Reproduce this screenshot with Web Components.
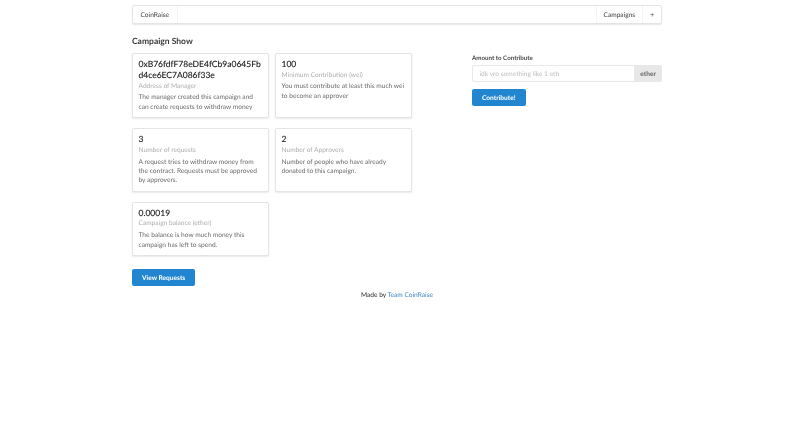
<!DOCTYPE html>
<html>
<head>
<meta charset="utf-8">
<title>CoinRaise</title>
<style>
  html, body { margin: 0; background: #fff; }
  body { font-family: Lato, "Open Sans", sans-serif; color: rgba(0,0,0,.87); text-rendering: geometricPrecision; }
</style>
</head>
<body>
<app-page>
  <top-menu></top-menu>
  <page-heading>Campaign Show</page-heading>
  <campaign-card slot="cards" style="grid-row: 1" title-text="0xB76fdfF78eDE4fCb9a0645Fbd4ce6EC7A086f33e" meta="Address of Manager">The manager created this campaign and can create requests to withdraw money</campaign-card>
  <campaign-card slot="cards" style="grid-row: 1" title-text="100" meta="Minimum Contribution (wei)">You must contribute at least this much wei to become an approver</campaign-card>
  <campaign-card slot="cards" style="grid-row: 2" title-text="3" meta="Number of requests">A request tries to withdraw money from the contract. Requests must be approved by approvers.</campaign-card>
  <campaign-card slot="cards" style="grid-row: 2" title-text="2" meta="Number of Approvers">Number of people who have already donated to this campaign.</campaign-card>
  <campaign-card slot="cards" style="grid-row: 3" title-text="0.00019" meta="Campaign balance (ether)">The balance is how much money this campaign has left to spend.</campaign-card>
  <blue-button slot="action">View Requests</blue-button>
  <contribute-form slot="side"></contribute-form>
</app-page>

<script>
class AppPage extends HTMLElement {
  connectedCallback() {
    this.attachShadow({ mode: 'open' });
    this.shadowRoot.innerHTML = `
      <style>
        :host { display: block; width: 530px; margin-left: 132px; padding-top: 5px; will-change: opacity; }
        .cols { display: flex; }
        .left { width: 280px; }
        .cards { display: grid; grid-template-columns: 137px 137px; column-gap: 6px; row-gap: 10px; align-items: stretch; }
        .action { display: flex; margin-top: 13px; }
        .side { width: 190px; margin-left: 60px; }
        footer { margin-top: 5px; text-align: center; font-size: 6.6px; line-height: 9.4px; }
        a { color: #4183c4; text-decoration: none; }
      </style>
      <slot></slot>
      <div class="cols">
        <div class="left">
          <div class="cards"><slot name="cards"></slot></div>
          <div class="action"><slot name="action"></slot></div>
        </div>
        <div class="side"><slot name="side"></slot></div>
      </div>
      <footer>Made by <a href="#">Team CoinRaise</a></footer>
    `;
  }
}

class TopMenu extends HTMLElement {
  connectedCallback() {
    this.attachShadow({ mode: 'open' });
    this.shadowRoot.innerHTML = `
      <style>
        :host { display: flex; height: 19px; box-sizing: border-box; border: 1px solid rgba(34,36,38,.12); border-radius: 2px; box-shadow: 0 1px 1px rgba(34,36,38,.1); font-size: 6.6px; color: rgba(0,0,0,.8); align-items: stretch; }
        .item { display: flex; align-items: center; padding: 0 7px; }
        .item.first { padding: 0 7.5px; border-right: 1px solid rgba(34,36,38,.05); }
        .gap { flex: 1; }
        .item.sep { border-left: 1px solid rgba(34,36,38,.05); }
      </style>
      <div class="item first">CoinRaise</div>
      <div class="gap"></div>
      <div class="item sep">Campaigns</div>
      <div class="item sep">+</div>
    `;
  }
}

class PageHeading extends HTMLElement {
  connectedCallback() {
    this.attachShadow({ mode: 'open' });
    this.shadowRoot.innerHTML = `
      <style>
        :host { display: block; margin: 11px 0 6px; font-size: 8.5px; line-height: 12px; font-weight: 700; color: rgba(0,0,0,.8); }
      </style>
      <slot></slot>
    `;
  }
}

class CampaignCard extends HTMLElement {
  connectedCallback() {
    this.attachShadow({ mode: 'open' });
    this.shadowRoot.innerHTML = `
      <style>
        :host { display: block; box-sizing: border-box; padding: 5px 5.5px 5px; background: #fff; border: 1px solid rgba(34,36,38,.12); border-radius: 2px; box-shadow: 0 1px 2px rgba(34,36,38,.1); }
        .title { font-size: 8.5px; line-height: 11px; font-weight: 400; word-break: break-all; color: rgba(0,0,0,.9); -webkit-text-stroke: .15px rgba(0,0,0,.7); }
        .meta { margin-top: .5px; font-size: 6.6px; line-height: 9.4px; color: rgba(0,0,0,.35); }
        .desc { margin-top: 2.5px; font-size: 6.6px; line-height: 9.4px; color: rgba(0,0,0,.62); }
      </style>
      <div class="title">${this.getAttribute('title-text')}</div>
      <div class="meta">${this.getAttribute('meta')}</div>
      <div class="desc"><slot></slot></div>
    `;
  }
}

class BlueButton extends HTMLElement {
  connectedCallback() {
    this.attachShadow({ mode: 'open' });
    this.shadowRoot.innerHTML = `
      <style>
        :host { display: inline-flex; align-items: center; height: 17px; padding: 0 10px; background: #2185d0; color: #fff; border-radius: 2px; font-size: 6.6px; font-weight: 700; }
      </style>
      <slot></slot>
    `;
  }
}

class ContributeForm extends HTMLElement {
  connectedCallback() {
    this.attachShadow({ mode: 'open' });
    this.shadowRoot.innerHTML = `
      <style>
        :host { display: block; }
        label { display: block; font-size: 6.2px; line-height: 8px; font-weight: 700; margin: 1.5px 0 2.5px; color: rgba(0,0,0,.75); }
        .field { display: flex; height: 17px; }
        .input { flex: 1; display: flex; align-items: center; padding: 0 6.5px; box-sizing: border-box; border: 1px solid rgba(34,36,38,.1); border-right: 0; border-radius: 2px 0 0 2px; font-size: 6.6px; color: rgba(0,0,0,.28); }
        .unit { display: flex; align-items: center; padding: 0 6px; background: #e8e8e8; color: rgba(0,0,0,.6); font-size: 6.6px; font-weight: 700; border-radius: 0 2px 2px 0; }
        .send { display: flex; margin-top: 7px; }
      </style>
      <label>Amount to Contribute</label>
      <div class="field">
        <div class="input">idk vro something like 1 eth</div>
        <div class="unit">ether</div>
      </div>
      <div class="send"><blue-button>Contribute!</blue-button></div>
    `;
  }
}

customElements.define('app-page', AppPage);
customElements.define('top-menu', TopMenu);
customElements.define('page-heading', PageHeading);
customElements.define('campaign-card', CampaignCard);
customElements.define('blue-button', BlueButton);
customElements.define('contribute-form', ContributeForm);
</script>
</body>
</html>
